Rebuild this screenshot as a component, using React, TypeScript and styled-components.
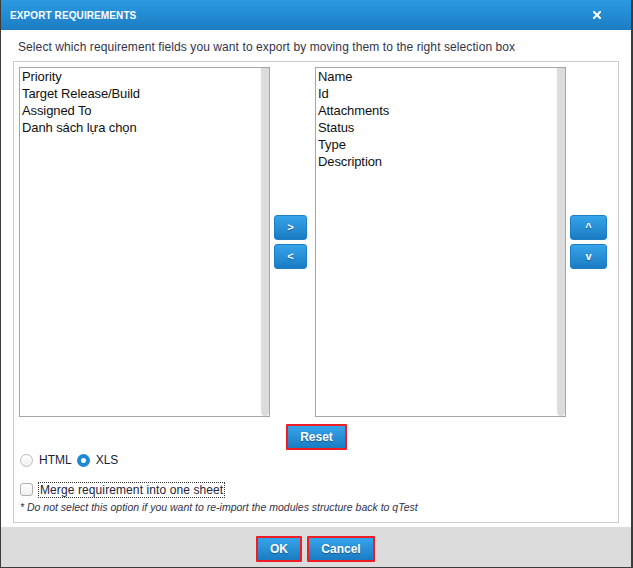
import styled, { createGlobalStyle } from 'styled-components';

const GlobalStyle = createGlobalStyle`
  html, body {
    margin: 0;
    padding: 0;
    background: #3b3b3b;
  }
  body {
    font-family: 'Liberation Sans', Arial, sans-serif;
  }
`;

const Dialog = styled.div`
  display: flex;
  flex-direction: column;
  width: 630px;
  height: 567px;
  margin-left: 1px;
  background: #ffffff;
`;

const Header = styled.header`
  display: flex;
  justify-content: space-between;
  align-items: center;
  height: 30px;
  padding: 0 30px 0 9px;
  background: linear-gradient(to bottom, #2a9be1 0%, #1c7cc3 100%);
  box-sizing: border-box;
`;

const Title = styled.h3`
  margin: 0;
  color: #ffffff;
  font-size: 10px;
  font-weight: bold;
  letter-spacing: 0.1px;
`;

const CloseIcon = styled.svg`
  width: 8px;
  height: 8px;
  cursor: pointer;
`;

const Body = styled.section`
  flex: 1;
  display: flex;
  flex-direction: column;
  padding: 0 12px;
`;

const Instruction = styled.p`
  margin: 10px 0 7px 5px;
  font-size: 12px;
  line-height: 14px;
  letter-spacing: 0.09px;
  color: #33334a;
`;

const Fieldset = styled.div`
  display: flex;
  flex-direction: column;
  height: 462px;
  padding: 5px 0 0 5px;
  border: 1px solid #cccccc;
  box-sizing: border-box;
`;

const ListsRow = styled.div`
  display: flex;
`;

const ListBox = styled.div`
  display: flex;
  flex-shrink: 0;
  width: 251px;
  height: 350px;
  border: 1px solid #a6a6a6;
  box-sizing: border-box;
  background: #ffffff;
`;

const Items = styled.ul`
  flex: 1;
  margin: 0;
  padding: 0 0 0 2px;
  list-style: none;
`;

const Item = styled.li`
  font-size: 13px;
  line-height: 17px;
  color: #111111;
  letter-spacing: -0.1px;
`;

const Track = styled.div`
  width: 8px;
  background: #dcdcdc;
  border-radius: 0 0 4px 4px;
`;

const ButtonColumn = styled.div<{ $width: number }>`
  display: flex;
  flex-direction: column;
  justify-content: center;
  flex-shrink: 0;
  gap: 4px;
  width: ${(p) => p.$width}px;
  padding-left: 4px;
  box-sizing: border-box;
`;

const BlueButton = styled.button<{ $width: number; $height?: number; $marked?: boolean }>`
  display: flex;
  align-items: center;
  justify-content: center;
  width: ${(p) => p.$width}px;
  height: ${(p) => p.$height ?? 25}px;
  padding: 0;
  border: ${(p) => (p.$marked ? '2px solid #ee1c25' : '1px solid #1d80c6')};
  border-radius: ${(p) => (p.$marked ? '1px' : '3px')};
  background: linear-gradient(to bottom, #36a4ea 0%, #1a7cc3 100%);
  color: #ffffff;
  font-family: 'Liberation Sans', Arial, sans-serif;
  font-size: 12px;
  font-weight: bold;
  text-shadow: 0 1px 1px rgba(0, 0, 0, 0.35);
  box-sizing: border-box;
  cursor: pointer;
`;

const ArrowGlyph = styled.span`
  font-size: 11px;
  font-weight: bold;
  line-height: 1;
`;

const ResetRow = styled.div`
  display: flex;
  justify-content: center;
  margin-top: 7px;
  padding-right: 4px;
`;

const RadioRow = styled.div`
  display: flex;
  align-items: center;
  height: 16px;
  margin-top: 2px;
  padding-left: 1px;
`;

const Radio = styled.span<{ $checked?: boolean }>`
  display: inline-block;
  width: 13px;
  height: 13px;
  border-radius: 50%;
  box-sizing: border-box;
  border: ${(p) => (p.$checked ? '4px solid #1e88d4' : '1px solid #bcbcbc')};
  background: ${(p) => (p.$checked ? '#ffffff' : 'linear-gradient(to bottom, #ffffff, #f0f0f0)')};
  margin-right: 6px;
`;

const OptionLabel = styled.span`
  font-size: 12px;
  color: #22223a;
  margin-right: 5px;
`;

const CheckRow = styled.div`
  display: flex;
  align-items: center;
  height: 17px;
  margin-top: 13px;
  padding-left: 1px;
`;

const CheckBox = styled.span`
  display: inline-block;
  width: 13px;
  height: 13px;
  border: 1px solid #b0b0b0;
  border-radius: 3px;
  box-sizing: border-box;
  background: linear-gradient(to bottom, #ffffff, #f0f0f0);
  margin-right: 5px;
`;

const FocusLabel = styled.span`
  font-size: 12px;
  line-height: 14px;
  color: #22223a;
  padding: 0 1px;
  border: 1px dotted #333333;
  letter-spacing: 0.1px;
`;

const Note = styled.p`
  margin: 3px 0 0 1px;
  font-size: 10.5px;
  line-height: 12px;
  font-style: italic;
  color: #33334a;
`;

const Footer = styled.footer`
  display: flex;
  justify-content: center;
  gap: 5px;
  height: 40px;
  padding: 9px 1px 0 0;
  background: #dcdcdc;
  box-sizing: border-box;
`;

const leftFields = ['Priority', 'Target Release/Build', 'Assigned To', 'Danh sách lựa chọn'];
const rightFields = ['Name', 'Id', 'Attachments', 'Status', 'Type', 'Description'];

const FieldList = ({ items }: { items: string[] }) => (
  <ListBox>
    <Items>
      {items.map((name) => (
        <Item key={name}>{name}</Item>
      ))}
    </Items>
    <Track />
  </ListBox>
);

const App = () => {
  return (
    <>
      <GlobalStyle />
      <Dialog>
        <Header>
          <Title>EXPORT REQUIREMENTS</Title>
          <CloseIcon viewBox="0 0 8 8">
            <path d="M1 1 L7 7 M7 1 L1 7" stroke="#ffffff" strokeWidth="2" strokeLinecap="square" />
          </CloseIcon>
        </Header>
        <Body>
          <Instruction>
            Select which requirement fields you want to export by moving them to the right selection box
          </Instruction>
          <Fieldset>
            <ListsRow>
              <FieldList items={leftFields} />
              <ButtonColumn $width={45}>
                <BlueButton $width={33}>
                  <ArrowGlyph>&gt;</ArrowGlyph>
                </BlueButton>
                <BlueButton $width={33}>
                  <ArrowGlyph>&lt;</ArrowGlyph>
                </BlueButton>
              </ButtonColumn>
              <FieldList items={rightFields} />
              <ButtonColumn $width={52}>
                <BlueButton $width={37}>
                  <ArrowGlyph>^</ArrowGlyph>
                </BlueButton>
                <BlueButton $width={37}>
                  <ArrowGlyph>v</ArrowGlyph>
                </BlueButton>
              </ButtonColumn>
            </ListsRow>
            <ResetRow>
              <BlueButton $width={61} $height={26} $marked>
                Reset
              </BlueButton>
            </ResetRow>
            <RadioRow>
              <Radio />
              <OptionLabel>HTML</OptionLabel>
              <Radio $checked />
              <OptionLabel>XLS</OptionLabel>
            </RadioRow>
            <CheckRow>
              <CheckBox />
              <FocusLabel>Merge requirement into one sheet</FocusLabel>
            </CheckRow>
            <Note>* Do not select this option if you want to re-import the modules structure back to qTest</Note>
          </Fieldset>
        </Body>
        <Footer>
          <BlueButton $width={46} $height={26} $marked>
            OK
          </BlueButton>
          <BlueButton $width={68} $height={26} $marked>
            Cancel
          </BlueButton>
        </Footer>
      </Dialog>
    </>
  );
};

export default App;
